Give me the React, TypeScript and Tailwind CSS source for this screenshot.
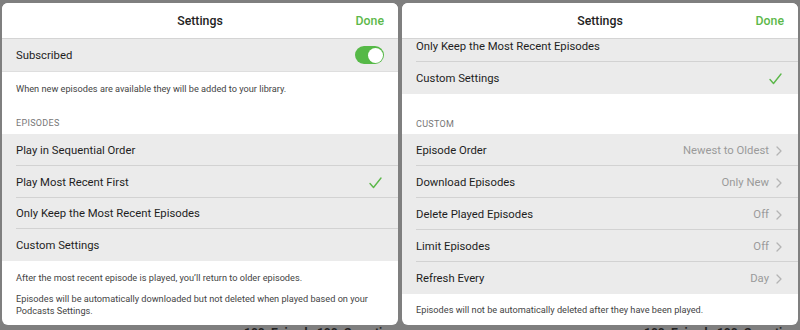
import React from "react";

const font = { fontFamily: "Roboto, 'Liberation Sans', Arial, sans-serif" };

function Check() {
  return (
    <svg width="13" height="12" viewBox="0 0 13 12" fill="none" className="relative top-[1px]">
      <path d="M1 6.5 L4.5 10.5 L12 1" stroke="#5cb84a" strokeWidth="1.4" strokeLinecap="round" strokeLinejoin="round" />
    </svg>
  );
}

function Chevron() {
  return (
    <svg width="6" height="10" viewBox="0 0 6 10" fill="none" className="ml-[7px]">
      <path d="M1 1 L5 5 L1 9" stroke="#b4b4b4" strokeWidth="1.3" strokeLinecap="round" strokeLinejoin="round" />
    </svg>
  );
}

function Header() {
  return (
    <div className="relative h-[36px] shrink-0 flex items-center justify-center border-b border-[#d4d4d4] bg-white">
      <span className="text-[12.3px] font-medium leading-[14px] text-[#222] pt-[1px]">Settings</span>
      <span className="absolute right-[14px] top-0 h-full flex items-center pt-[1px] text-[12.3px] leading-[14px] font-medium text-[#5cb84a]">Done</span>
    </div>
  );
}

function Row({
  label,
  value,
  check,
  last,
  h = 32,
  shift = 1,
}: {
  label: string;
  value?: string;
  check?: boolean;
  last?: boolean;
  h?: number;
  shift?: number;
}) {
  return (
    <div className="bg-[#ebebeb] pl-[14px] shrink-0">
      <div
        className={"flex items-center justify-between pr-[16px] " + (last ? "" : "border-b border-[#d2d2d2]")}
        style={{ height: h }}
      >
        <span className="text-[11.3px] leading-[14px] text-[#1e1e1e]" style={{ position: "relative", top: shift }}>
          {label}
        </span>
        {check && <Check />}
        {value && (
          <span className="flex items-center text-[11.3px] leading-[14px] text-[#9a9a9a] relative top-[1px]">
            {value}
            <Chevron />
          </span>
        )}
      </div>
    </div>
  );
}

function Note({ children, className = "" }: { children: React.ReactNode; className?: string }) {
  return <div className={"px-[14px] text-[9.2px] leading-[12px] text-[#444] " + className}>{children}</div>;
}

function Section({ children, className = "" }: { children: React.ReactNode; className?: string }) {
  return <div className={"px-[14px] text-[9px] leading-[12px] tracking-[0.3px] text-[#777] " + className}>{children}</div>;
}

export default function App() {
  return (
    <div className="relative w-[800px] h-[330px] overflow-hidden bg-[#7f7f7f]" style={font}>
      <div className="absolute left-[244px] top-[324px] text-[12px] font-bold text-[#222] whitespace-nowrap">100. Episode 100: Sometimes</div>
      <div className="absolute left-[644px] top-[324px] text-[12px] font-bold text-[#222] whitespace-nowrap">100. Episode 100: Sometimes</div>
      <div className="relative flex gap-[4px] pl-[2px] pt-[3px]">
        <div className="w-[396px] h-[322px] bg-white rounded-[6px] overflow-hidden flex flex-col">
          <Header />
          <div className="bg-[#ebebeb] h-[33px] shrink-0 flex items-center justify-between pl-[14px] pr-[14px] border-b border-[#dedede]">
            <span className="text-[11.3px] leading-[14px] text-[#1e1e1e] pt-[2px]">Subscribed</span>
            <div className="w-[29px] h-[18px] rounded-full bg-[#56b947] relative">
              <div className="absolute right-[1.5px] top-[1.5px] w-[15px] h-[15px] rounded-full bg-white" />
            </div>
          </div>
          <Note className="pt-[11px]">When new episodes are available they will be added to your library.</Note>
          <div className="h-[22px] shrink-0" />
          <Section className="pb-[5px]">EPISODES</Section>
          <Row label="Play in Sequential Order" />
          <Row label="Play Most Recent First" check />
          <Row label="Only Keep the Most Recent Episodes" h={31} />
          <Row label="Custom Settings" last />
          <Note className="pt-[11px]">After the most recent episode is played, you’ll return to older episodes.</Note>
          <Note className="pt-[9px]">
            Episodes will be automatically downloaded but not deleted when played based on your
            <br />
            Podcasts Settings.
          </Note>
        </div>
        <div className="w-[396px] h-[322px] bg-white rounded-[6px] overflow-hidden flex flex-col">
          <Header />
          <Row label="Only Keep the Most Recent Episodes" h={23} shift={-3} />
          <Row label="Custom Settings" check last />
          <div className="h-[24px] shrink-0" />
          <Section className="pb-[4px]">CUSTOM</Section>
          <Row label="Episode Order" value="Newest to Oldest" />
          <Row label="Download Episodes" value="Only New" />
          <Row label="Delete Played Episodes" value="Off" />
          <Row label="Limit Episodes" value="Off" />
          <Row label="Refresh Every" value="Day" last />
          <Note className="pt-[10px]">Episodes will not be automatically deleted after they have been played.</Note>
        </div>
      </div>
    </div>
  );
}
